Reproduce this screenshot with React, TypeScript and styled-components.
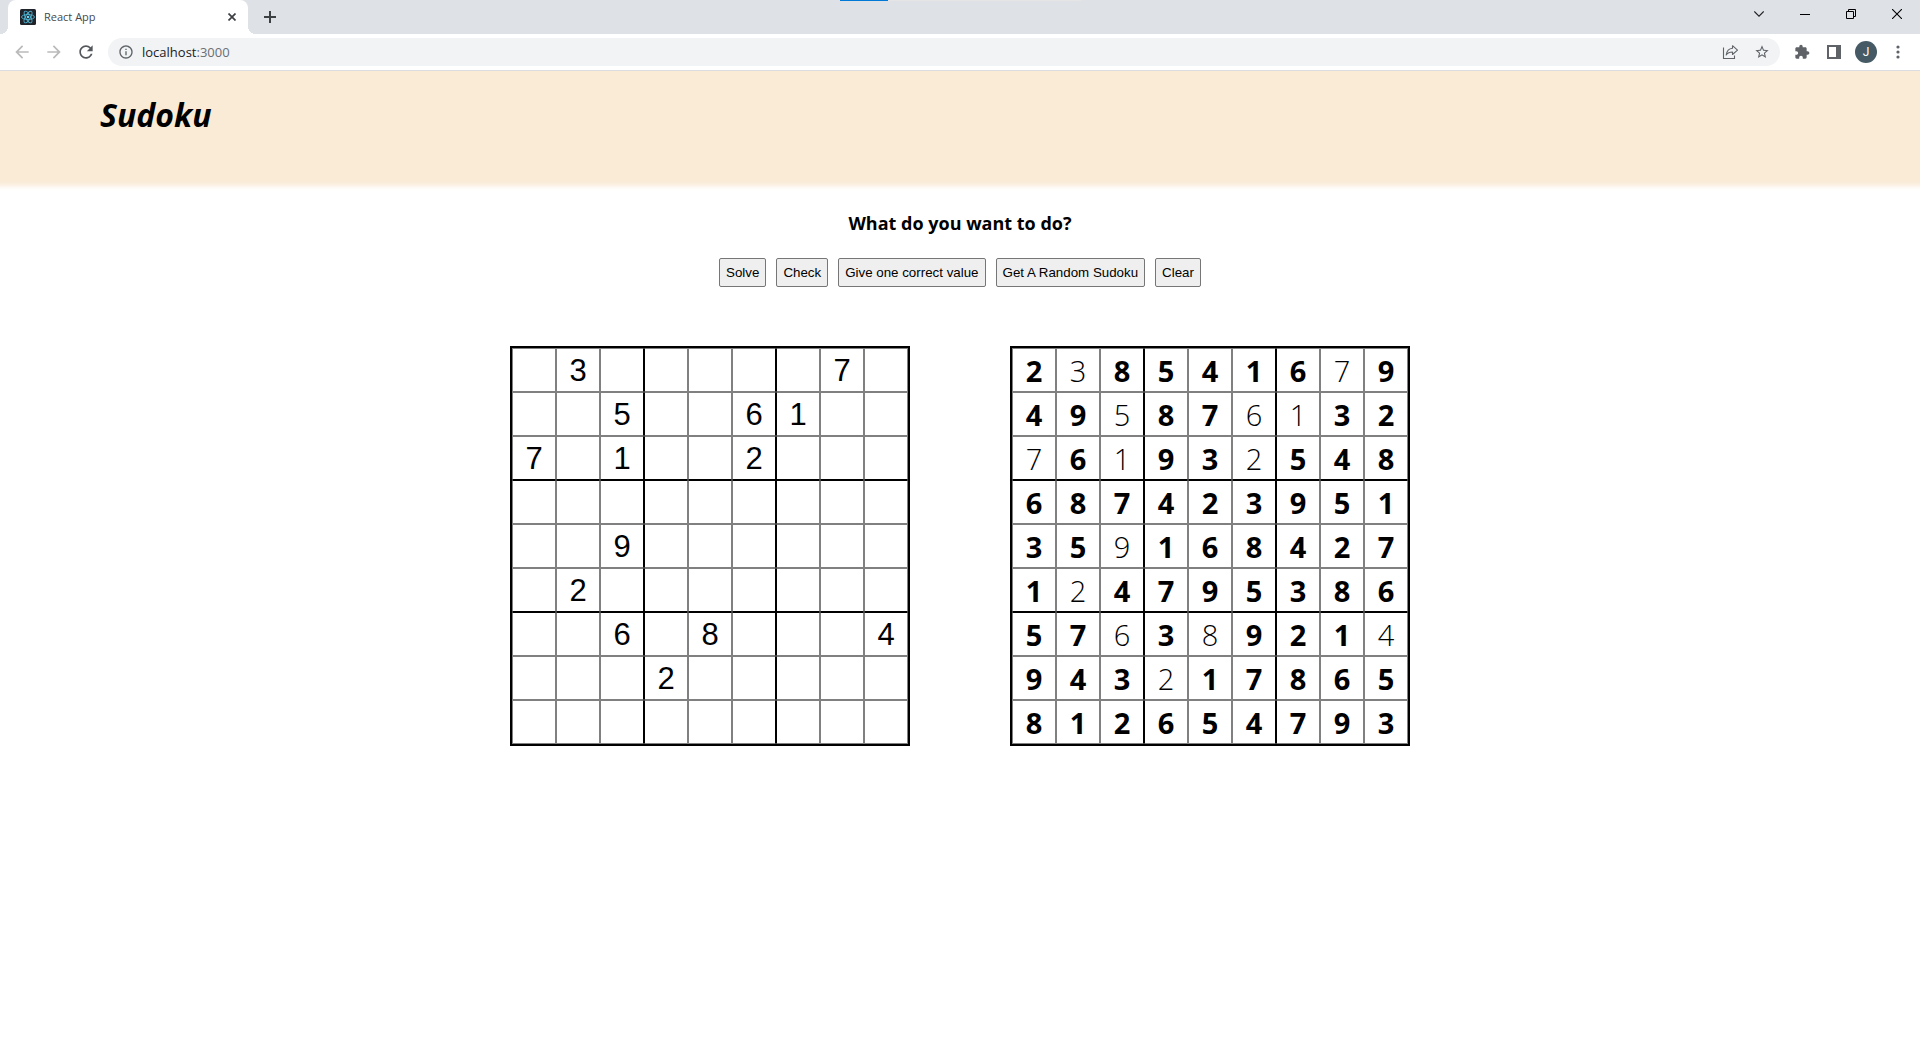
import React, { useState } from "react";
import styled, { createGlobalStyle } from "styled-components";

const uiFont = '"Segoe UI", "Open Sans", "Noto Sans", sans-serif';
const controlFont = 'Arial, "Liberation Sans", sans-serif';

const GlobalStyle = createGlobalStyle`
  *, *::before, *::after { box-sizing: border-box; }
  body { margin: 0; background: #fff; color: #000; font-family: ${uiFont}; }
  h1, h2, p { margin: 0; }
`;

/* ---------- browser chrome ---------- */

const Chrome = styled.div`
  position: relative;
  z-index: 1;
`;

const TabStrip = styled.div`
  position: relative;
  display: flex;
  align-items: stretch;
  height: 34px;
  padding-left: 8px;
  background: #dee1e6;
`;

const ProgressTrack = styled.div`
  position: absolute;
  top: 0;
  left: 50%;
  width: 241px;
  height: 1px;
  margin-left: -120px;
  background: #e5e5e5;
`;

const ProgressFill = styled.div`
  width: 48px;
  height: 1px;
  background: #0078d7;
`;

const Tab = styled.div`
  position: relative;
  display: flex;
  align-items: center;
  gap: 8px;
  width: 240px;
  padding: 0 8px 0 12px;
  background: #fff;
  border-radius: 8px 8px 0 0;

  &::before, &::after {
    content: "";
    position: absolute;
    bottom: 0;
    width: 8px;
    height: 8px;
  }
  &::before {
    right: 100%;
    background: radial-gradient(circle at 0 0, transparent 8px, #fff 8px);
  }
  &::after {
    left: 100%;
    background: radial-gradient(circle at 100% 0, transparent 8px, #fff 8px);
  }
`;

const TabTitle = styled.span`
  flex: 1;
  font-size: 11px;
  line-height: 16px;
  color: #45484c;
`;

const ChromeButton = styled.button<{ $width?: number; $color?: string }>`
  display: flex;
  align-items: center;
  justify-content: center;
  flex: none;
  width: ${(p) => p.$width ?? 32}px;
  height: 28px;
  padding: 0;
  border: 0;
  background: none;
  color: ${(p) => p.$color ?? "#5f6368"};
`;

const TabActions = styled.div`
  display: flex;
  align-items: center;
  flex: 1;
  padding-left: 6px;
`;

const WindowControls = styled.div`
  display: flex;
`;

const Toolbar = styled.div`
  display: flex;
  align-items: center;
  gap: 6px;
  height: 37px;
  padding: 0 6px;
  background: #fff;
  border-bottom: 1px solid #dadce0;
`;

const ButtonGroup = styled.div`
  display: flex;
`;

const AddressBar = styled.div`
  display: flex;
  align-items: center;
  flex: 1;
  height: 28px;
  padding: 0 2px 0 10px;
  border-radius: 14px;
  background: #f1f3f4;
`;

const Address = styled.div`
  flex: 1;
  padding-left: 8px;
  font-size: 13px;
  line-height: 20px;
  color: #202124;
`;

const Port = styled.span`
  color: #6a6e73;
`;

const Avatar = styled.span`
  display: flex;
  align-items: center;
  justify-content: center;
  width: 22px;
  height: 22px;
  border-radius: 50%;
  background: #455a64;
  color: #fff;
  font: 12px/22px Roboto, sans-serif;
`;

/* ---------- page ---------- */

const Header = styled.header`
  height: 110px;
  padding: 20px 100px;
  background: #faebd7;
  box-shadow: 0 0 5px 5px #faebd7;
`;

const Title = styled.h1`
  font-size: 32px;
  line-height: 48px;
  font-weight: 700;
  font-style: italic;
`;

const Main = styled.main`
  display: flex;
  flex-direction: column;
  align-items: center;
`;

const Question = styled.h2`
  margin: 29px 0 22px;
  font-size: 18px;
  line-height: 26px;
  font-weight: 700;
`;

const Actions = styled.div`
  display: flex;
  justify-content: center;
  gap: 10px;
`;

const ActionButton = styled.button`
  height: 29px;
  padding: 0 6px;
  border: 1px solid #767676;
  border-radius: 2px;
  background: #efefef;
  color: #000;
  font-family: ${controlFont};
`;

const Boards = styled.div`
  display: flex;
  flex-wrap: wrap;
  justify-content: center;
  gap: 100px;
  margin-top: 59px;
`;

const Board = styled.table`
  border: 2px solid #000;
  border-collapse: separate;
  border-spacing: 0;
`;

const Cell = styled.td<{ $row: number; $col: number }>`
  width: 44px;
  height: 44px;
  padding: 0;
  border: 1px solid #808080;
  border-left-color: ${(p) => (p.$col === 3 || p.$col === 6 ? "#000" : "#808080")};
  border-right-color: ${(p) => (p.$col === 2 || p.$col === 5 ? "#000" : "#808080")};
  border-top-color: ${(p) => (p.$row === 3 || p.$row === 6 ? "#000" : "#808080")};
  border-bottom-color: ${(p) => (p.$row === 2 || p.$row === 5 ? "#000" : "#808080")};
`;

const CellValue = styled.div<{ $given: boolean }>`
  padding-top: 2px;
  font-size: 29px;
  line-height: 40px;
  font-weight: ${(p) => (p.$given ? 300 : 700)};
  text-align: center;
`;

const CellInput = styled.input`
  display: block;
  width: 42px;
  height: 42px;
  padding: 2px 0 0;
  border: 0;
  outline: 0;
  background: none;
  color: #000;
  font: 31px/40px ${controlFont};
  text-align: center;
`;

const puzzle = [
  " 3     7 ",
  "  5  61  ",
  "7 1  2   ",
  "         ",
  "  9      ",
  " 2       ",
  "  6 8   4",
  "   2     ",
  "         ",
].map((row) => row.split("").map((c) => c.trim()));

const solution = [
  "238541679",
  "495876132",
  "761932548",
  "687423951",
  "359168427",
  "124795386",
  "576389214",
  "943217865",
  "812654793",
].map((row) => row.split(""));

const actions = ["Solve", "Check", "Give one correct value", "Get A Random Sudoku", "Clear"];

const MaterialIcon = ({ d, size }: { d: string; size: number }) => (
  <svg width={size} height={size} viewBox="0 0 24 24" fill="currentColor" aria-hidden="true">
    <path d={d} />
  </svg>
);

const paths = {
  back: "M20 11H7.83l5.59-5.59L12 4l-8 8 8 8 1.41-1.41L7.83 13H20v-2z",
  forward: "M12 4l-1.41 1.41L16.17 11H4v2h12.17l-5.58 5.59L12 20l8-8z",
  reload:
    "M17.65 6.35C16.2 4.9 14.21 4 12 4c-4.42 0-7.99 3.58-7.99 8s3.57 8 7.99 8c3.73 0 6.84-2.55 7.73-6h-2.08c-.82 2.33-3.04 4-5.65 4-3.31 0-6-2.69-6-6s2.69-6 6-6c1.66 0 3.14.69 4.22 1.78L13 11h7V4l-2.35 2.35z",
  info: "M11 7h2v2h-2zm0 4h2v6h-2zm1-9C6.48 2 2 6.48 2 12s4.48 10 10 10 10-4.48 10-10S17.52 2 12 2zm0 18c-4.41 0-8-3.59-8-8s3.59-8 8-8 8 3.59 8 8-3.59 8-8 8z",
  star: "M22 9.24l-7.19-.62L12 2 9.19 8.63 2 9.24l5.46 4.73L5.82 21 12 17.27 18.18 21l-1.63-7.03L22 9.24zM12 15.4l-3.76 2.27 1-4.28-3.32-2.88 4.38-.38L12 6.1l1.71 4.04 4.38.38-3.32 2.88 1 4.28L12 15.4z",
  puzzle:
    "M20.5 11H19V7c0-1.1-.9-2-2-2h-4V3.5C13 2.12 11.88 1 10.5 1S8 2.12 8 3.5V5H4c-1.1 0-1.99.9-1.99 2v3.8H3.5c1.49 0 2.7 1.21 2.7 2.7s-1.21 2.7-2.7 2.7H2V20c0 1.1.9 2 2 2h3.8v-1.5c0-1.49 1.21-2.7 2.7-2.7 1.49 0 2.7 1.21 2.7 2.7V22H17c1.1 0 2-.9 2-2v-4h1.5c1.38 0 2.5-1.12 2.5-2.5S21.88 11 20.5 11z",
};

const ReactLogo = () => (
  <svg width="16" height="16" viewBox="0 0 32 32" fill="none" aria-hidden="true">
    <rect width="32" height="32" rx="3" fill="#20232a" />
    <g stroke="#4fb3cf" strokeWidth="1.8">
      <ellipse cx="16" cy="16" rx="13" ry="5" />
      <ellipse cx="16" cy="16" rx="13" ry="5" transform="rotate(60 16 16)" />
      <ellipse cx="16" cy="16" rx="13" ry="5" transform="rotate(120 16 16)" />
    </g>
    <circle cx="16" cy="16" r="2.6" fill="#61dafb" />
  </svg>
);

const BrowserChrome = () => (
  <Chrome>
    <TabStrip>
      <Tab>
        <ReactLogo />
        <TabTitle>React App</TabTitle>
        <ChromeButton $width={16} $color="#3c4043" aria-label="Close tab">
          <svg width="8" height="8" viewBox="0 0 8 8" stroke="currentColor" strokeWidth="1.7">
            <path d="M.5.5l7 7M7.5.5l-7 7" />
          </svg>
        </ChromeButton>
      </Tab>
      <TabActions>
        <ChromeButton $color="#3c4043" aria-label="New tab">
          <svg width="12" height="12" viewBox="0 0 12 12" stroke="currentColor" strokeWidth="2">
            <path d="M6 0v12M0 6h12" />
          </svg>
        </ChromeButton>
      </TabActions>
      <WindowControls>
        <ChromeButton $width={46} $color="#202124" aria-label="Search tabs">
          <svg width="10" height="6" viewBox="0 0 10 6" fill="none" stroke="currentColor" strokeWidth="1.1">
            <path d="M.3.5L5 5.200L9.700.5" />
          </svg>
        </ChromeButton>
        <ChromeButton $width={46} $color="#000" aria-label="Minimize">
          <svg width="10" height="10" viewBox="0 0 10 10" stroke="currentColor">
            <path d="M0 5.500h10" />
          </svg>
        </ChromeButton>
        <ChromeButton $width={46} $color="#000" aria-label="Restore">
          <svg width="10" height="10" viewBox="0 0 10 10" fill="none" stroke="currentColor">
            <path d="M.5 2.500h7v7h-7zM2.500 2.500v-2h7v7h-2" />
          </svg>
        </ChromeButton>
        <ChromeButton $width={46} $color="#000" aria-label="Close">
          <svg width="10" height="10" viewBox="0 0 10 10" stroke="currentColor" strokeWidth="1.1">
            <path d="M0 0l10 10M10 0L0 10" />
          </svg>
        </ChromeButton>
      </WindowControls>
      <ProgressTrack>
        <ProgressFill />
      </ProgressTrack>
    </TabStrip>
    <Toolbar>
      <ButtonGroup>
        <ChromeButton $color="#bababc" aria-label="Back">
          <MaterialIcon d={paths.back} size={20} />
        </ChromeButton>
        <ChromeButton $color="#bababc" aria-label="Forward">
          <MaterialIcon d={paths.forward} size={20} />
        </ChromeButton>
        <ChromeButton $color="#54585d" aria-label="Reload">
          <MaterialIcon d={paths.reload} size={20} />
        </ChromeButton>
      </ButtonGroup>
      <AddressBar>
        <ChromeButton $width={16} aria-label="Site information">
          <MaterialIcon d={paths.info} size={16} />
        </ChromeButton>
        <Address>
          localhost<Port>:3000</Port>
        </Address>
        <ChromeButton aria-label="Share">
          <svg width="16" height="16" viewBox="0 0 16 16" fill="none" stroke="currentColor" strokeWidth="1.1">
            <path d="M1.500 3.500v11h11v-3" />
            <path d="M10.500 1.700L15.500 6.200L10.500 10.500V8C7.700 8 5.700 8.800 4.200 11C4.700 7.500 6.700 4.700 10.500 4.300z" strokeLinejoin="round" />
          </svg>
        </ChromeButton>
        <ChromeButton aria-label="Bookmark this tab">
          <MaterialIcon d={paths.star} size={16} />
        </ChromeButton>
      </AddressBar>
      <ButtonGroup>
        <ChromeButton aria-label="Extensions">
          <MaterialIcon d={paths.puzzle} size={16} />
        </ChromeButton>
        <ChromeButton aria-label="Side panel">
          <svg width="14" height="14" viewBox="0 0 14 14" aria-hidden="true">
            <path fill="currentColor" fillRule="evenodd" d="M0 0h14v14H0zM2 2v10h7V2z" />
          </svg>
        </ChromeButton>
        <ChromeButton aria-label="Profile">
          <Avatar>J</Avatar>
        </ChromeButton>
        <ChromeButton aria-label="Menu">
          <svg width="4" height="14" viewBox="0 0 4 14" fill="currentColor" aria-hidden="true">
            <circle cx="2" cy="2" r="1.6" />
            <circle cx="2" cy="7" r="1.6" />
            <circle cx="2" cy="12" r="1.6" />
          </svg>
        </ChromeButton>
      </ButtonGroup>
    </Toolbar>
  </Chrome>
);

const PuzzleBoard = () => {
  const [values, setValues] = useState(puzzle);
  const update = (r: number, c: number, value: string) =>
    setValues(values.map((row, i) => row.map((v, j) => (i === r && j === c ? value : v))));

  return (
    <Board aria-label="Puzzle">
      <tbody>
        {values.map((row, r) => (
          <tr key={r}>
            {row.map((value, c) => (
              <Cell key={c} $row={r} $col={c}>
                <CellInput
                  aria-label={`Row ${r + 1}, column ${c + 1}`}
                  maxLength={1}
                  value={value}
                  onChange={(e) => update(r, c, e.target.value)}
                />
              </Cell>
            ))}
          </tr>
        ))}
      </tbody>
    </Board>
  );
};

const SolutionBoard = () => (
  <Board aria-label="Solution">
    <tbody>
      {solution.map((row, r) => (
        <tr key={r}>
          {row.map((value, c) => (
            <Cell key={c} $row={r} $col={c}>
              <CellValue $given={puzzle[r][c] !== ""}>{value}</CellValue>
            </Cell>
          ))}
        </tr>
      ))}
    </tbody>
  </Board>
);

export default function App() {
  return (
    <>
      <GlobalStyle />
      <BrowserChrome />
      <Header>
        <Title>Sudoku</Title>
      </Header>
      <Main>
        <Question>What do you want to do?</Question>
        <Actions>
          {actions.map((label) => (
            <ActionButton key={label}>{label}</ActionButton>
          ))}
        </Actions>
        <Boards>
          <PuzzleBoard />
          <SolutionBoard />
        </Boards>
      </Main>
    </>
  );
}
